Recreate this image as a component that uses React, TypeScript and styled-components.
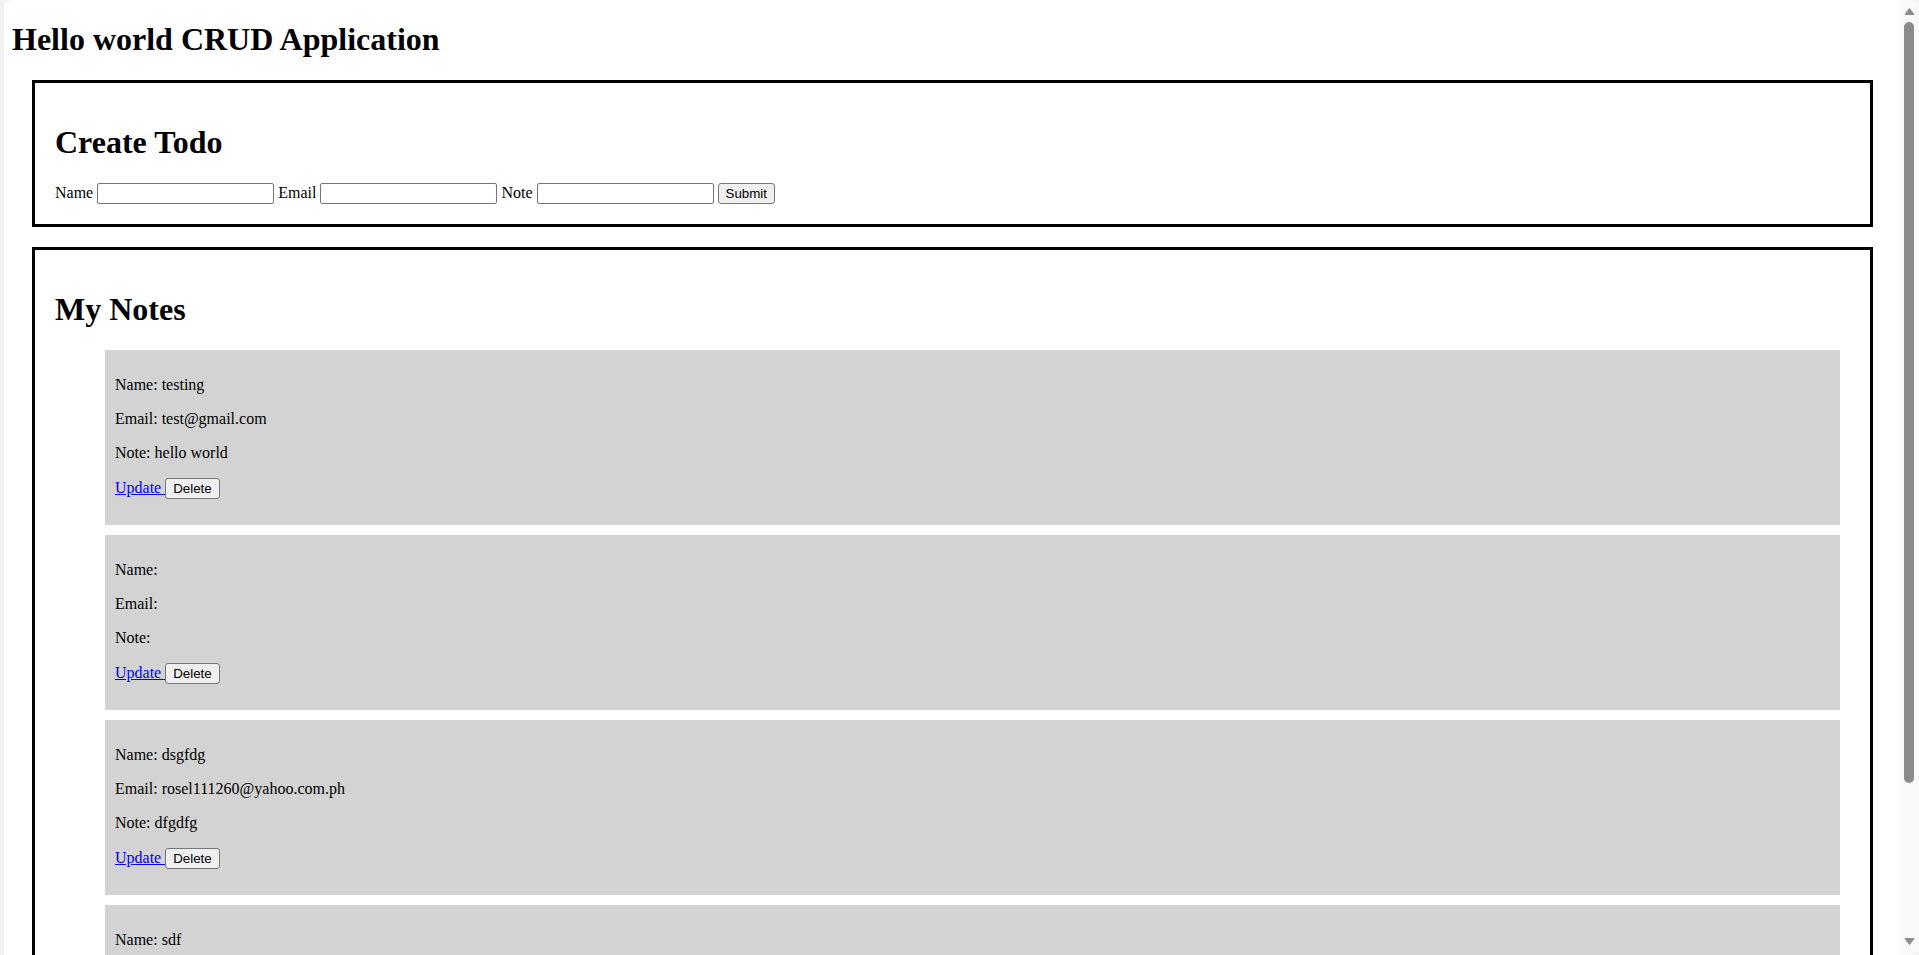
import React from "react";
import styled, { createGlobalStyle } from "styled-components";

const GlobalStyle = createGlobalStyle`
  html {
    background: #f3f3f3;
  }
  body {
    margin: 0 18px 0 4px;
    background: #ffffff;
    border-top-left-radius: 8px;
    min-height: 100vh;
    font-family: "Liberation Serif", "Times New Roman", serif;
    font-size: 16px;
    color: #000;
  }
`;

const Page = styled.div`
  padding: 8px;
`;

const Title = styled.h1`
  margin: 13.44px 0 21.44px;
  font-size: 32px;
  font-weight: bold;
`;

const Panel = styled.div`
  border: 3px solid #000;
  padding: 20px;
  margin: 20px;
`;

const PanelHeading = styled.h1`
  margin: 21.44px 0;
  font-size: 32px;
  font-weight: bold;
`;

const FormRow = styled.div`
  font-size: 16px;
`;

const TextInput = styled.input`
  box-sizing: border-box;
  width: 177px;
  height: 21px;
  padding: 1px 2px;
  border: 1px solid #767676;
  border-radius: 2px;
  background: #fff;
  font: 13.333px "Liberation Sans", Arial, sans-serif;
  vertical-align: baseline;
`;

const Button = styled.button`
  box-sizing: border-box;
  height: 21px;
  padding: 1px 7px;
  border: 1px solid #767676;
  border-radius: 3px;
  background: #efefef;
  color: #000;
  font: 13.333px "Liberation Sans", Arial, sans-serif;
`;

const NoteList = styled.ul`
  list-style: none;
  margin: 16px 0;
  padding-left: 40px;
`;

const NoteCard = styled.li`
  background: #d3d3d3;
  margin: 10px;
  padding: 10px;
`;

const Field = styled.p`
  margin: 16px 0;
`;

const Actions = styled.p`
  margin: 16px 0;
`;

const UpdateLink = styled.a`
  color: #0000ee;
  text-decoration: underline;
`;

/* Window scrollbar drawn over the right edge of the viewport */
const ScrollTrack = styled.div`
  position: fixed;
  top: 0;
  right: 0;
  bottom: 0;
  width: 18px;
  background: #f9f9f9;
  border-radius: 0 8px 8px 0;
  display: flex;
  flex-direction: column;
`;

const ArrowButton = styled.div`
  height: 20px;
  flex: none;
  display: flex;
`;

const Thumb = styled.div`
  flex: none;
  height: 761px;
  width: 10px;
  margin: 2px 0 0 3px;
  border-radius: 5px;
  background: #8b8b8b;
`;

const Spacer = styled.div`
  flex: 1;
`;

function ScrollBar() {
  return (
    <ScrollTrack aria-hidden>
      <ArrowButton>
        <svg width="18" height="20" viewBox="0 0 18 20">
          <polygon points="4,14.5 13,14.5 8.5,8.5" fill="#8b8b8b" stroke="#8b8b8b" strokeWidth="1" strokeLinejoin="round" />
        </svg>
      </ArrowButton>
      <Thumb />
      <Spacer />
      <ArrowButton>
        <svg width="18" height="20" viewBox="0 0 18 20">
          <polygon points="4,3.5 13,3.5 8.5,9.5" fill="#8b8b8b" stroke="#8b8b8b" strokeWidth="1" strokeLinejoin="round" />
        </svg>
      </ArrowButton>
    </ScrollTrack>
  );
}

type Note = { name: string; email: string; note: string };

const notes: Note[] = [
  { name: "testing", email: "test@gmail.com", note: "hello world" },
  { name: "", email: "", note: "" },
  { name: "dsgfdg", email: "rosel111260@yahoo.com.ph", note: "dfgdfg" },
  { name: "sdf", email: "sdf@gmail.com", note: "sdf" },
];

export default function App() {
  return (
    <>
      <GlobalStyle />
      <Page>
        <Title>Hello world CRUD Application</Title>
        <Panel>
          <PanelHeading>Create Todo</PanelHeading>
          <FormRow>
            Name <TextInput type="text" /> Email <TextInput type="text" /> Note{" "}
            <TextInput type="text" /> <Button type="button">Submit</Button>
          </FormRow>
        </Panel>
        <Panel>
          <PanelHeading>My Notes</PanelHeading>
          <NoteList>
            {notes.map((n, i) => (
              <NoteCard key={i}>
                <Field>Name: {n.name}</Field>
                <Field>Email: {n.email}</Field>
                <Field>Note: {n.note}</Field>
                <Actions>
                  <UpdateLink href="#">Update </UpdateLink>
                  <Button type="button">Delete</Button>
                </Actions>
              </NoteCard>
            ))}
          </NoteList>
        </Panel>
      </Page>
      <ScrollBar />
    </>
  );
}
